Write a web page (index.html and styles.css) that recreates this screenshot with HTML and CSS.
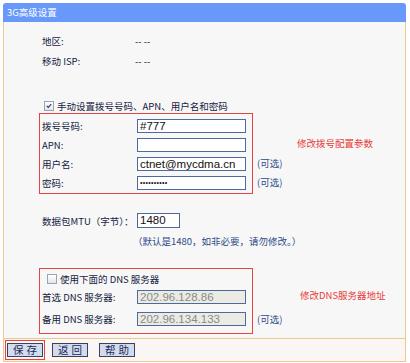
FILE: index.html
```html
<!DOCTYPE html>
<html lang="zh-CN">
<head>
<meta charset="utf-8">
<title>3G高级设置</title>
<link rel="stylesheet" href="styles.css">
</head>
<body>
<div class="panel">
  <div class="hdr">3G高级设置</div>
  <div class="main">
    <div class="info">
      <div class="row"><span class="lbl">地区:</span><span class="val">-- --</span></div>
      <div class="row"><span class="lbl">移动 ISP:</span><span class="val">-- --</span></div>
    </div>

    <div class="chkrow">
      <span class="cb checked"><svg viewBox="0 0 10 10" width="10" height="10"><path d="M2.2 4.8 L4.1 6.8 L7.8 2.6" fill="none" stroke="#2c3e72" stroke-width="1.5"/></svg></span>
      <span>手动设置拨号号码、APN、用户名和密码</span>
    </div>

    <div class="sect">
      <div class="redbox box1">
        <div class="frow"><span class="lbl">拨号号码:</span><span class="inp">#777</span></div>
        <div class="frow"><span class="lbl">APN:</span><span class="inp"></span></div>
        <div class="frow"><span class="lbl">用户名:</span><span class="inp">ctnet@mycdma.cn</span></div>
        <div class="frow"><span class="lbl">密码:</span><span class="inp pwd">••••••••••</span></div>
      </div>
      <div class="side side1">
        <div class="srow"></div>
        <div class="srow"></div>
        <div class="srow opt">(可选)</div>
        <div class="srow opt">(可选)</div>
      </div>
      <div class="note note1">修改拨号配置参数</div>
    </div>

    <div class="mtu">
      <span class="lbl">数据包MTU（字节）：</span><span class="inp small">1480</span>
    </div>
    <div class="hint">（默认是1480，如非必要，请勿修改。）</div>

    <div class="sect">
      <div class="redbox box2">
        <div class="chkrow2">
          <span class="cb"></span>
          <span>使用下面的 DNS 服务器</span>
        </div>
        <div class="drow"><span class="lbl">首选 DNS 服务器:</span><span class="inp dis">202.96.128.86</span></div>
        <div class="drow"><span class="lbl">备用 DNS 服务器:</span><span class="inp dis">202.96.134.133</span></div>
      </div>
      <div class="side side2">
        <div class="drowside opt">(可选)</div>
      </div>
      <div class="note note2">修改DNS服务器地址</div>
    </div>
  </div>
  <div class="foot">
    <div class="savebox"><span class="btn">保存</span></div>
    <span class="btn btn-back">返回</span>
    <span class="btn btn-help">帮助</span>
  </div>
</div>
</body>
</html>
```
FILE: styles.css
```css
body {
  margin: 0;
  background: #ffffff;
  font-family: "Noto Sans CJK SC", "Liberation Sans", sans-serif;
  font-size: 9.5px;
  color: #141b40;
}

.panel {
  margin: 3px 0 0 3px;
  width: 403px;
}

.hdr {
  height: 19px;
  line-height: 19px;
  background: #6798fa;
  color: #ffffff;
  border-radius: 3px 3px 0 0;
  padding-left: 4px;
}

.main {
  height: 316px;
  box-sizing: border-box;
  background: #f7f7f7;
  border-left: 1px solid #f1c78c;
  border-right: 1px solid #f1c78c;
  padding-top: 9px;
}

.info {
  padding-left: 38px;
}

.row {
  display: flex;
  height: 20px;
  align-items: center;
}

.row .lbl {
  width: 93px;
}

.chkrow {
  margin-top: 28px;
  height: 14px;
  display: flex;
  align-items: center;
  padding-left: 40px;
  gap: 3px;
}

.cb {
  width: 10px;
  height: 10px;
  box-sizing: border-box;
  border: 1px solid #9aa3b4;
  background: linear-gradient(#ffffff, #e3e6eb);
  display: inline-flex;
  align-items: center;
  justify-content: center;
  flex: none;
}

.cb svg {
  display: block;
}

.sect {
  display: flex;
  align-items: flex-start;
  margin-left: 35px;
}

.redbox {
  width: 214px;
  box-sizing: border-box;
  border: 1px solid #e64444;
  flex: none;
}

.box1 {
  padding: 2px 0 1px 2px;
}

.frow {
  display: flex;
  align-items: center;
  height: 19px;
}

.lbl {
  width: 95px;
  flex: none;
}

.inp {
  width: 109px;
  height: 14px;
  box-sizing: border-box;
  border: 1px solid #4d6a9c;
  background: #ffffff;
  font-family: "Liberation Sans", Arial, sans-serif;
  font-size: 11.5px;
  line-height: 12px;
  padding-left: 2px;
  color: #111111;
  overflow: hidden;
  white-space: nowrap;
  display: block;
}

.inp.pwd {
  font-size: 7px;
  letter-spacing: 0.3px;
}

.inp.small {
  width: 43px;
  height: 15px;
  line-height: 13px;
}

.inp.dis {
  background: #ebebe4;
  color: #8a8a8a;
}

.side {
  width: 40px;
  margin-left: 4px;
  flex: none;
  color: #2b4a88;
}

.side1 {
  padding-top: 3px;
}

.srow {
  height: 19px;
  line-height: 19px;
}

.note {
  color: #e83a3a;
  line-height: 14px;
}

.note1 {
  padding-top: 23px;
}

.mtu {
  margin-top: 19px;
  padding-left: 38px;
  display: flex;
  align-items: center;
  height: 15px;
}

.hint {
  margin-top: 6px;
  padding-left: 129px;
  line-height: 14px;
  color: #2b4a88;
}

.box2 {
  margin-top: 20px;
  padding: 3px 0 3px 2px;
}

.chkrow2 {
  height: 14px;
  display: flex;
  align-items: center;
  gap: 3px;
  padding-left: 5px;
}

.drow {
  display: flex;
  align-items: center;
  height: 22px;
}

.drow .inp {
  height: 14px;
}

.side2 {
  padding-top: 60px;
}

.drowside {
  height: 22px;
  line-height: 22px;
}

.note2 {
  padding-top: 40px;
  margin-left: 3px;
}

.foot {
  display: flex;
  align-items: center;
  height: 22px;
  background: #fbf6f6;
  border: 1px solid #f1c78c;
  padding-left: 1px;
}

.savebox {
  border: 1px solid #e64444;
  padding: 2px 1px;
  display: flex;
}

.btn {
  width: 36px;
  height: 14px;
  box-sizing: border-box;
  border: 1px solid #3b4157;
  background: #d3dcec;
  color: #1c2a5a;
  font-size: 10.5px;
  line-height: 12px;
  letter-spacing: 3px;
  text-indent: 3px;
  text-align: center;
  display: block;
}

.btn-back {
  margin-left: 7px;
}

.btn-help {
  margin-left: 11px;
}
```
